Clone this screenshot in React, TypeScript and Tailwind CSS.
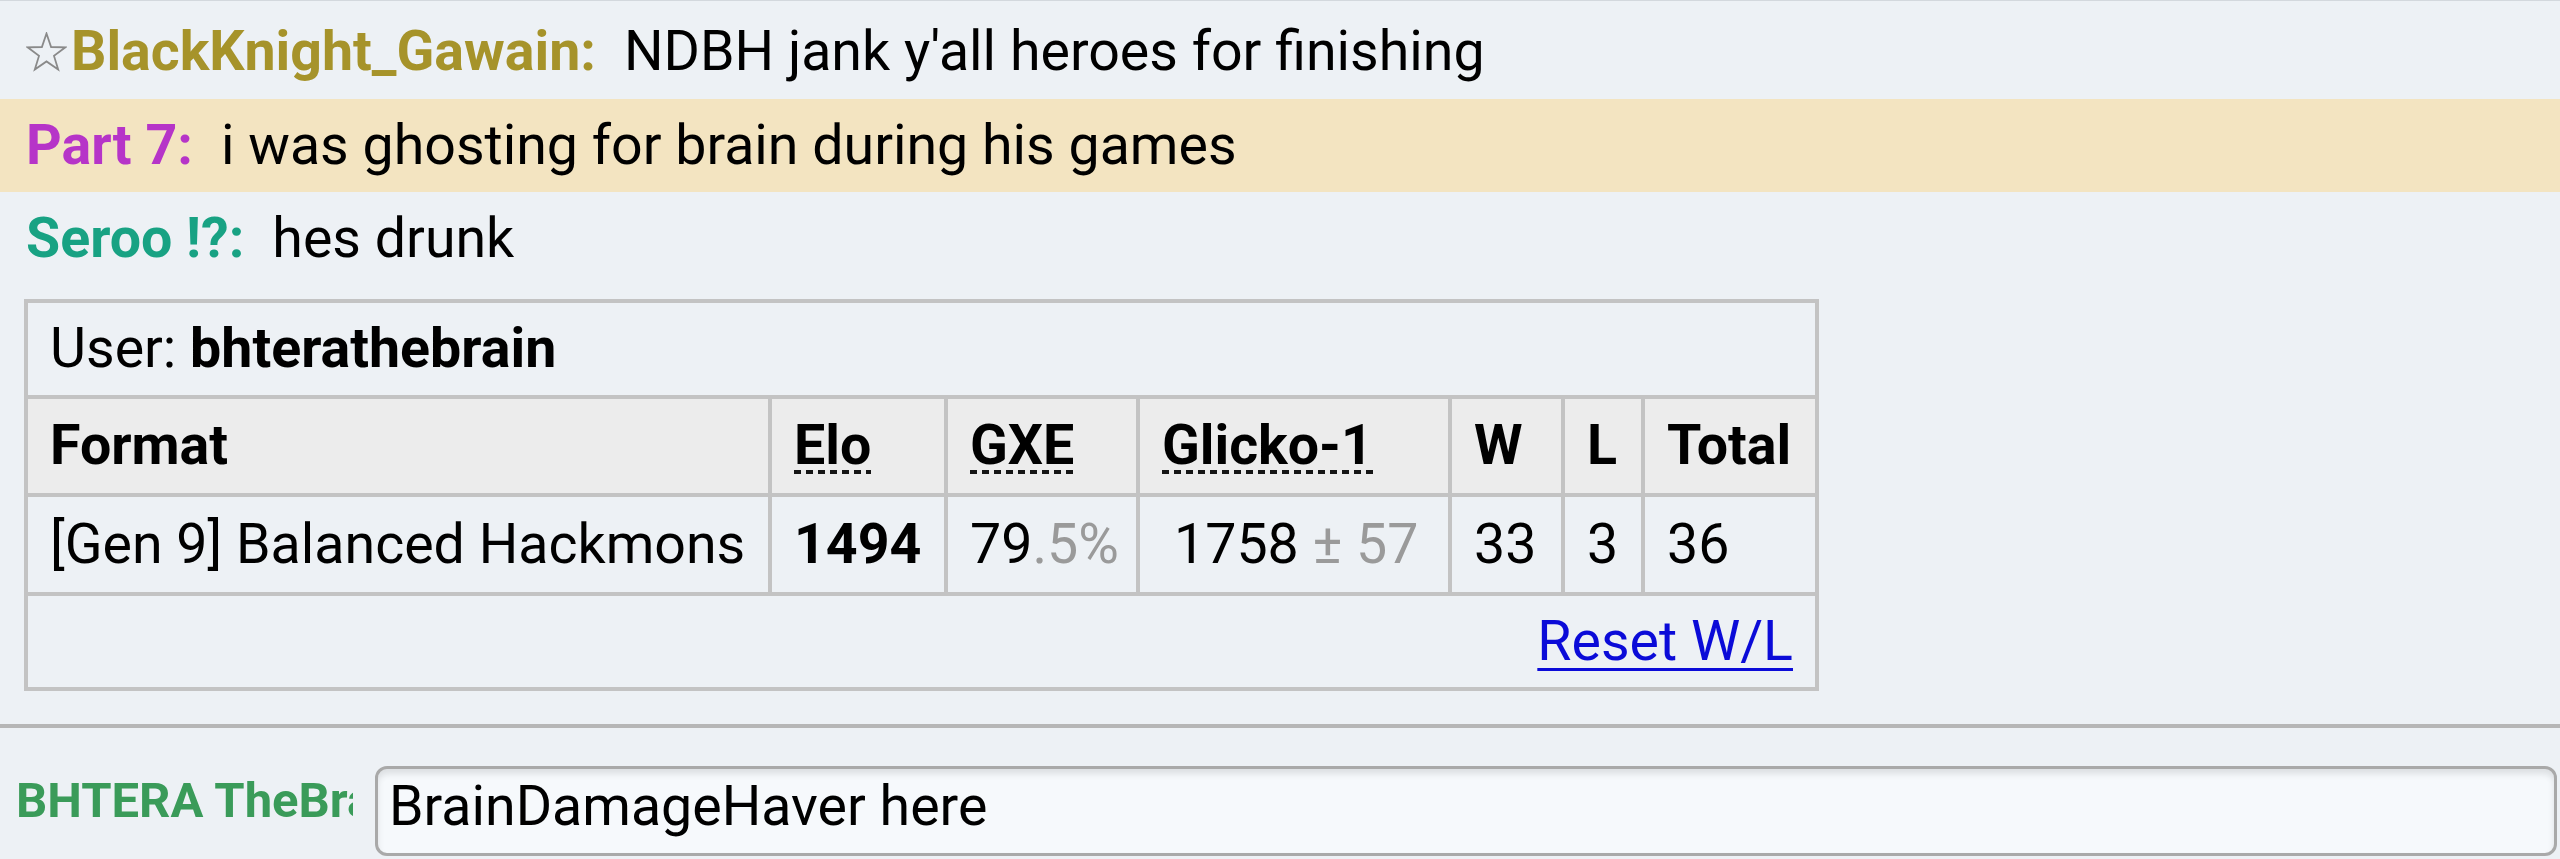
import React from 'react';

const messages = [
  { id: 1, star: true, name: 'BlackKnight_Gawain', color: 'text-[#a6932a]', text: "NDBH jank y'all heroes for finishing", highlight: false, height: 'h-[94px] leading-[94px]' },
  { id: 2, star: false, name: 'Part 7', color: 'text-[#b634c8]', text: 'i was ghosting for brain during his games', highlight: true, height: 'h-[93px] leading-[93px]' },
  { id: 3, star: false, name: 'Seroo !?', color: 'text-[#18a283]', text: 'hes drunk', highlight: false, height: 'h-[93px] leading-[93px]' },
];

const Star = () => (
  <svg width="41" height="41" viewBox="0 0 41 41" className="inline-block align-[-3px] mr-[4px]">
    <polygon
      points="20.5,1.5 25.1,15 39.4,15.3 28,23.9 32.2,37.6 20.5,29.4 8.8,37.6 13,23.9 1.6,15.3 15.9,15"
      fill="none"
      stroke="#8a8a8a"
      strokeWidth="1.8"
    />
  </svg>
);

// dotted underline used on the abbreviated column names
const Abbr = ({ children }: { children: React.ReactNode }) => (
  <span className="inline-block leading-none bg-[linear-gradient(to_right,#151515_58%,transparent_58%)] bg-[length:12px_4px] bg-repeat-x bg-[position:0_100%]">
    {children}
  </span>
);

const cell = 'flex items-center px-[22px] border-r-4 border-b-4 border-[#c3c3c3] whitespace-nowrap';

const RatingTable = () => (
  <div className="ml-[24px] mt-[14px] w-[1795px] grid grid-cols-[744px_176px_192px_312px_113px_80px_174px] border-l-4 border-t-4 border-[#c3c3c3]">
    {/* user row */}
    <div className={`${cell} col-span-7 h-[96px]`}>
      <span>User:&nbsp;</span>
      <strong className="font-bold">bhterathebrain</strong>
    </div>

    {/* header */}
    <div className={`${cell} h-[98px] bg-[#ececec] font-bold`}>Format</div>
    <div className={`${cell} h-[98px] bg-[#ececec] font-bold`}><Abbr>Elo</Abbr></div>
    <div className={`${cell} h-[98px] bg-[#ececec] font-bold`}><Abbr>GXE</Abbr></div>
    <div className={`${cell} h-[98px] bg-[#ececec] font-bold`}><Abbr>Glicko-1</Abbr></div>
    <div className={`${cell} h-[98px] bg-[#ececec] font-bold`}>W</div>
    <div className={`${cell} h-[98px] bg-[#ececec] font-bold`}>L</div>
    <div className={`${cell} h-[98px] bg-[#ececec] font-bold`}>Total</div>

    {/* data */}
    <div className={`${cell} h-[99px]`}>[Gen 9] Balanced Hackmons</div>
    <div className={`${cell} h-[99px] font-bold`}>1494</div>
    <div className={`${cell} h-[99px]`}>
      79<span className="text-[#9a9a9a]">.5%</span>
    </div>
    <div className={`${cell} h-[99px] pl-[34px]`}>
      1758<span className="text-[#9a9a9a]">&nbsp;± 57</span>
    </div>
    <div className={`${cell} h-[99px]`}>33</div>
    <div className={`${cell} h-[99px]`}>3</div>
    <div className={`${cell} h-[99px]`}>36</div>

    {/* footer */}
    <div className={`${cell} col-span-7 h-[95px] justify-end`}>
      <a href="#" className="text-[#0b0bd8] underline decoration-[3px] underline-offset-[8px]">Reset W/L</a>
    </div>
  </div>
);

const App = () => {
  return (
    <div className="w-[2560px] h-[859px] overflow-hidden bg-[#edf1f5] font-['Roboto',sans-serif] text-[55.5px] text-black">
      <div className="border-t border-[#d3d8dd] pt-[4px]">
        {messages.map((m) => (
          <div
            key={m.id}
            className={`${m.height} pl-[26px] whitespace-nowrap ${m.highlight ? 'bg-[#f3e4c1]' : ''}`}
          >
            {m.star && <Star />}
            <strong className={`font-bold ${m.color}`}>{m.name}:</strong>
            <span className="ml-[28px]">{m.text}</span>
          </div>
        ))}
      </div>

      <RatingTable />

      <div className="mt-[33px] h-[4px] bg-[#b6b6b6]" />

      {/* chat input */}
      <div className="mt-[38px] flex items-start">
        <div className="w-[353px] shrink-0 pl-[16px] overflow-hidden whitespace-nowrap h-[70px] leading-[70px] text-[49px] font-bold text-[#3a9b59]">
          BHTERA TheBrain
        </div>
        <div className="ml-[22px] mr-[3px] flex-1 h-[90px] rounded-[12px] border-[3px] border-[#a9a9a9] bg-[#f6f9fc] shadow-[inset_0_5px_6px_rgba(0,0,0,0.10)] pl-[11px] leading-[76px] whitespace-nowrap">
          BrainDamageHaver here
        </div>
      </div>
    </div>
  );
};

export default App;
